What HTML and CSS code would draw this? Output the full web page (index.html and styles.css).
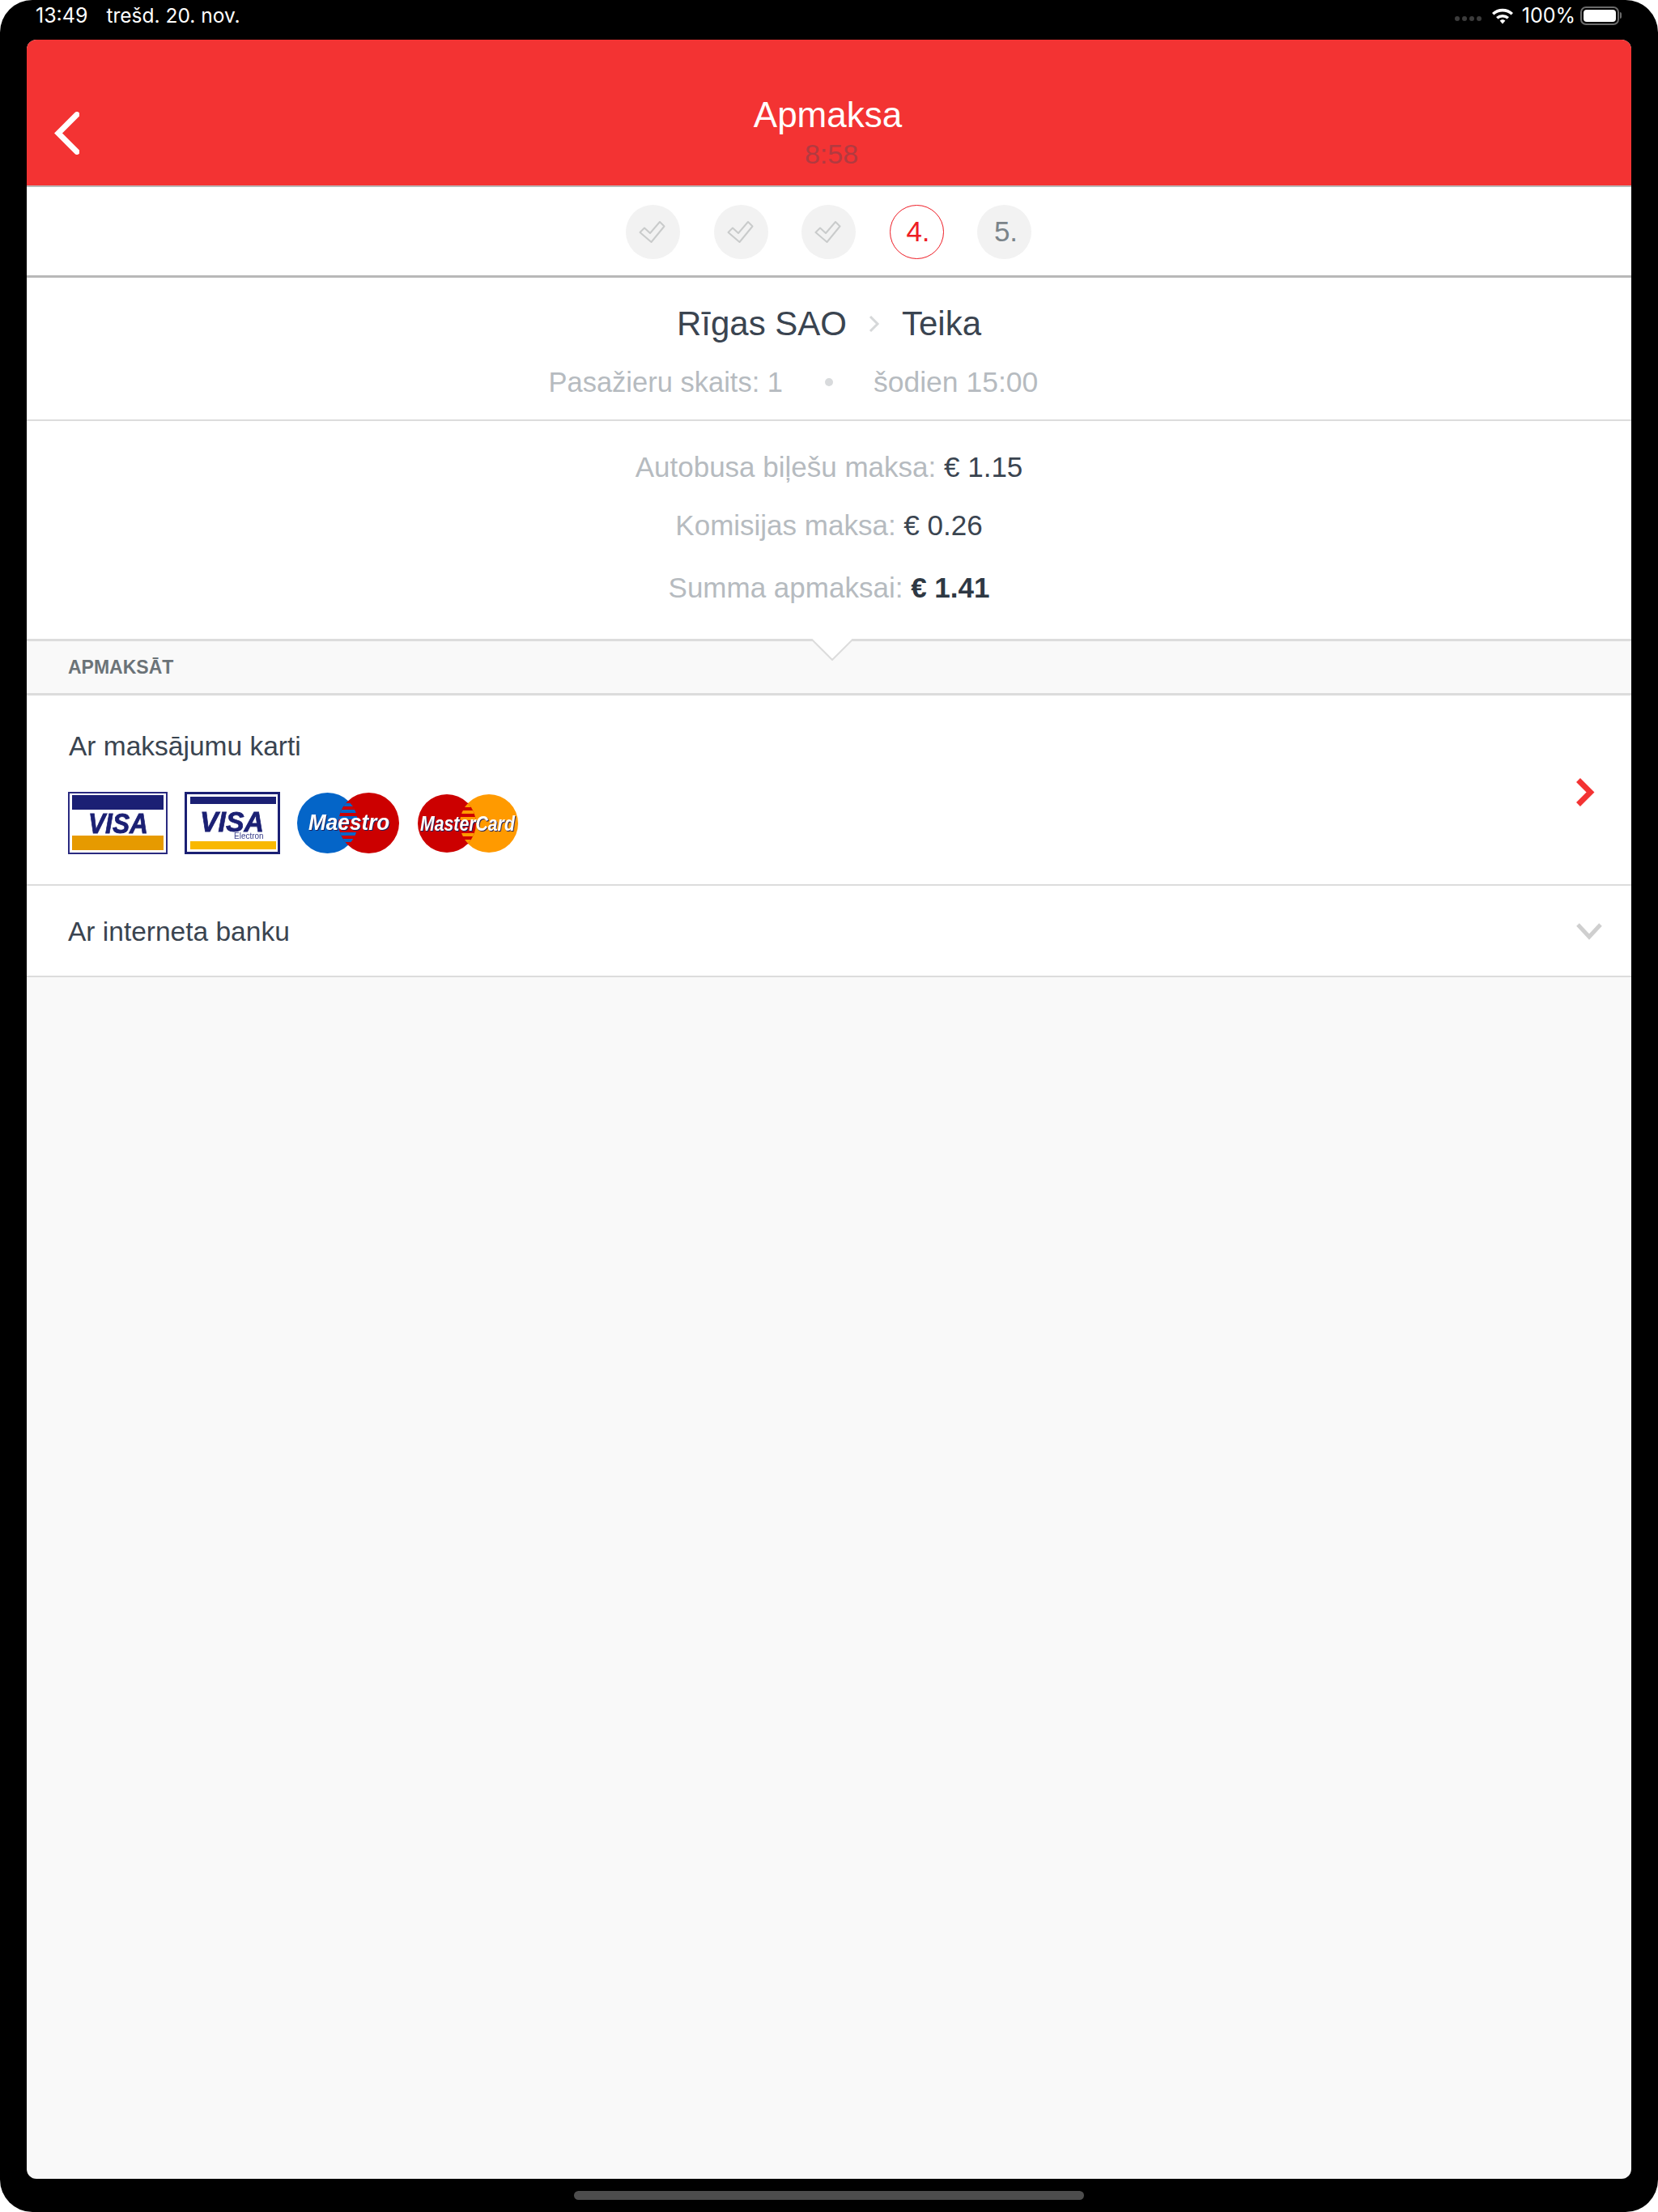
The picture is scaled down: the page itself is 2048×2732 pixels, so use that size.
FILE: index.html
```html
<!DOCTYPE html>
<html>
<head>
    <title>Apmaksa</title>
    <meta name="viewport" content="width=device-width, initial-scale=1.0">
    <link rel="stylesheet" href="styles.css">
</head>
<body>
    <svg class="defs" width="0" height="0">
        <symbol id="tick" viewBox="0 0 33 29">
            <path d="M1.5 15 L7 9.5 L14 16 L26 2 L31.5 7.5 L15.5 27 Z" fill="none" stroke="#c9cbcb" stroke-width="2" stroke-linejoin="round"/>
        </symbol>
        <clipPath id="maestro-lens">
            <circle cx="37.5" cy="38.5" r="37.5"/>
        </clipPath>
        <clipPath id="maestro-right">
            <circle cx="88.5" cy="38.5" r="37.5"/>
        </clipPath>
        <clipPath id="mc-left">
            <circle cx="36" cy="36" r="36"/>
        </clipPath>
        <clipPath id="mc-right">
            <circle cx="88" cy="36" r="36"/>
        </clipPath>
    </svg>

    <div class="device">
        <div class="statusbar">
            <span class="clock">13:49</span>
            <span class="date">trešd. 20. nov.</span>
            <span class="status-right">
                <span class="signal"><i></i><i></i><i></i><i></i></span>
                <svg class="wifi" viewBox="0 0 28 21">
                    <path d="M1 7 A19 19 0 0 1 27 7 L24.6 9.6 A15.5 15.5 0 0 0 3.4 9.6 Z" fill="#fff"/>
                    <path d="M6 12 A12 12 0 0 1 22 12 L19.6 14.6 A8.5 8.5 0 0 0 8.4 14.6 Z" fill="#fff"/>
                    <path d="M10.6 16.6 A5 5 0 0 1 17.4 16.6 L14 20.5 Z" fill="#fff"/>
                </svg>
                <span class="battery-text">100%</span>
                <span class="battery"><b></b></span>
                <span class="battery-nub"></span>
            </span>
        </div>

        <div class="app">
            <header class="topbar">
                <svg class="back" viewBox="0 0 32 53">
                    <path d="M29 3.5 L6 26.5 L29 49.5" fill="none" stroke="#fff" stroke-width="7" stroke-linecap="round" stroke-linejoin="miter"/>
                </svg>
                <div class="topbar-title">
                    <div class="title">Apmaksa</div>
                    <div class="timer">8:58</div>
                </div>
            </header>

            <div class="steps">
                <div class="step"><svg class="tick"><use href="#tick"/></svg></div>
                <div class="step"><svg class="tick"><use href="#tick"/></svg></div>
                <div class="step"><svg class="tick"><use href="#tick"/></svg></div>
                <div class="step current">4.</div>
                <div class="step">5.</div>
            </div>

            <section class="route">
                <div class="route-names">
                    <span>Rīgas SAO</span>
                    <svg class="route-arrow" viewBox="0 0 14 22">
                        <path d="M2 2 L11 11 L2 20" fill="none" stroke="#d6d8d9" stroke-width="3"/>
                    </svg>
                    <span>Teika</span>
                </div>
                <div class="route-meta">
                    <span class="meta-left">Pasažieru skaits: 1</span>
                    <i class="dot"></i>
                    <span class="meta-right">šodien 15:00</span>
                </div>
            </section>

            <section class="prices">
                <div class="price">Autobusa biļešu maksa: <span>€ 1.15</span></div>
                <div class="price">Komisijas maksa: <span>€ 0.26</span></div>
                <div class="price total">Summa apmaksai: <span>€ 1.41</span></div>
            </section>

            <div class="section-head">
                APMAKSĀT
                <svg class="notch" viewBox="0 0 52 27">
                    <path d="M0 0 L26 26 L52 0 Z" fill="#fff"/>
                    <path d="M0 0 L26 26 L52 0" fill="none" stroke="#dcdcdc" stroke-width="2"/>
                </svg>
            </div>

            <div class="pay-row card-row">
                <div class="pay-main">
                    <div class="pay-label">Ar maksājumu karti</div>
                    <div class="card-logos">
                        <svg class="logo visa" viewBox="0 0 123 77">
                            <rect x="1" y="1" width="121" height="75" fill="#fff" stroke="#2a2a80" stroke-width="2"/>
                            <rect x="5" y="4" width="113" height="18" fill="#1b2074"/>
                            <rect x="5" y="54" width="113" height="18" fill="#e69a00"/>
                            <text transform="translate(25 51) scale(.88 1)" class="visa-word">VISA</text>
                        </svg>
                        <svg class="logo visa-e" viewBox="0 0 118 77">
                            <rect x="1.5" y="1.5" width="115" height="74" fill="#fff" stroke="#1b2074" stroke-width="3"/>
                            <rect x="7" y="6" width="106" height="9" fill="#1b2074"/>
                            <rect x="7" y="61" width="106" height="10" fill="#f9b800"/>
                            <text transform="translate(19 49) scale(.94 1)" class="visa-word">VISA</text>
                            <text x="61" y="58" class="electron">Electron</text>
                        </svg>
                        <svg class="logo maestro" viewBox="0 0 126 77">
                            <circle cx="37.5" cy="38.5" r="37.5" fill="#0465c8"/>
                            <circle cx="88.5" cy="38.5" r="37.5" fill="#cc0000"/>
                            <g clip-path="url(#maestro-lens)">
                                <g clip-path="url(#maestro-right)" fill="#0465c8">
                                    <rect x="50" y="14" width="28" height="4"/>
                                    <rect x="50" y="22" width="28" height="4"/>
                                    <rect x="50" y="30" width="28" height="4"/>
                                    <rect x="50" y="50" width="28" height="4"/>
                                    <rect x="50" y="58" width="28" height="4"/>
                                    <rect x="50" y="66" width="28" height="4"/>
                                </g>
                            </g>
                            <text transform="translate(14 47) scale(.97 1)" class="mark-word">Maestro</text>
                        </svg>
                        <svg class="logo mastercard" viewBox="0 0 124 72">
                            <circle cx="88" cy="36" r="36" fill="#ff9a00"/>
                            <circle cx="36" cy="36" r="36" fill="#cc0000"/>
                            <g clip-path="url(#mc-left)">
                                <g clip-path="url(#mc-right)" fill="#ff9a00">
                                    <rect x="48" y="12" width="28" height="4"/>
                                    <rect x="48" y="20" width="28" height="4"/>
                                    <rect x="48" y="28" width="28" height="4"/>
                                    <rect x="48" y="48" width="28" height="4"/>
                                    <rect x="48" y="56" width="28" height="4"/>
                                </g>
                            </g>
                            <text transform="translate(3 45) scale(.85 1)" class="mark-word small">MasterCard</text>
                        </svg>
                    </div>
                </div>
                <svg class="row-icon go" viewBox="0 0 24 37">
                    <path d="M3.5 3.5 L18.5 18.5 L3.5 33.5" fill="none" stroke="#f33333" stroke-width="7" stroke-linejoin="miter"/>
                </svg>
            </div>

            <div class="pay-row bank-row">
                <div class="pay-label">Ar interneta banku</div>
                <svg class="row-icon open" viewBox="0 0 32 22">
                    <path d="M2 3 L16 18 L30 3" fill="none" stroke="#cfcfcf" stroke-width="5"/>
                </svg>
            </div>
        </div>

        <div class="home-area"><div class="home-bar"></div></div>
    </div>
</body>
</html>
```

FILE: styles.css
```css
* { box-sizing: border-box; }
html, body { margin: 0; padding: 0; background: #fff; }
.defs { display: block; }

.device { width: 2048px; height: 2732px; background: #000; border-radius: 40px; padding: 0 33px; display: flex; flex-direction: column; overflow: hidden; font-family: "Liberation Sans", Arial, sans-serif; }

/* status bar */
.statusbar { height: 49px; flex: none; display: flex; align-items: center; margin: 0 -33px; padding: 0 45px 11px 44px; color: #fff; font-family: Inter, sans-serif; font-size: 25px; }
.date { margin-left: 23px; font-size: 24.5px; }
.status-right { margin-left: auto; display: flex; align-items: center; }
.signal { display: flex; gap: 3px; margin-right: 12px; margin-top: 8px; }
.signal i { width: 6px; height: 6px; border-radius: 50%; background: #3c3c3c; }
.wifi { width: 28px; height: 21px; margin-right: 10px; }
.battery { width: 48px; height: 23px; border: 2px solid #6b6b6b; border-radius: 7px; padding: 2px; margin-left: 6px; display: block; }
.battery b { display: block; height: 100%; background: #fff; border-radius: 4px; }
.battery-nub { width: 2px; height: 8px; background: #6b6b6b; border-radius: 0 2px 2px 0; margin-left: 1px; }

/* app window */
.app { flex: none; height: 2642px; background: #f9f9f9; border-radius: 12px; overflow: hidden; display: flex; flex-direction: column; }

.topbar { height: 182px; flex: none; background: #f33333; border-bottom: 2px solid #b8b8b8; display: flex; padding: 0 68px 0 33px; }
.back { width: 32px; height: 53px; margin-top: 89px; flex: none; }
.topbar-title { flex: 1; text-align: center; padding-top: 68px; }
.title { color: #fff; font-size: 44px; line-height: 50px; }
.timer { color: #b23a40; font-size: 34px; line-height: 40px; margin-top: 3px; padding-left: 9px; }

.steps { height: 112px; flex: none; background: #fff; border-bottom: 3px solid #b8b8b8; display: flex; justify-content: center; align-items: center; gap: 41.5px; padding: 1px 1px 0 0; }
.step { width: 67px; height: 67px; border-radius: 50%; background: #f2f2f2; color: #7b848a; font-size: 35px; padding-left: 4px; display: flex; align-items: center; justify-content: center; }
.step:has(.tick) { padding: 0 2px 0 0; }
.step.current { background: #fff; border: 1.5px solid #ee1c25; color: #ee1c25; }
.tick { width: 33px; height: 29px; }

.route { height: 177px; flex: none; background: #fff; border-bottom: 2px solid #dcdcdc; padding-top: 29px; }
.route-names { display: flex; justify-content: center; align-items: center; gap: 27px; color: #3a4450; font-size: 42px; line-height: 56px; }
.route-arrow { width: 14px; height: 22px; }
.route-meta { display: grid; grid-template-columns: 1fr auto 1fr; align-items: center; gap: 50px; color: #b6bbc0; font-size: 34.5px; line-height: 44px; margin-top: 22px; }
.meta-left { text-align: right; padding-right: 2px; }
.meta-right { font-size: 35.5px; }
.dot { width: 10px; height: 10px; border-radius: 50%; background: #d8dadc; }

.prices { height: 269px; flex: none; background: #fff; text-align: center; padding-top: 34px; color: #b6bbc0; font-size: 35px; }
.price { line-height: 46px; margin-bottom: 26px; }
.price span { color: #3a4450; }
.price.total { margin-top: 31px; }
.price.total span { color: #2e3843; font-weight: 700; }

.section-head { height: 70px; flex: none; background: #f9f9f9; border-top: 3px solid #dcdcdc; border-bottom: 3px solid #dcdcdc; padding: 17px 0 0 51px; color: #6b7378; font-size: 23px; font-weight: 700; line-height: 30px; position: relative; }
.notch { position: absolute; left: 969px; top: -3px; width: 52px; height: 27px; }

.pay-row { background: #fff; flex: none; display: flex; align-items: center; justify-content: space-between; border-bottom: 2px solid #dcdcdc; padding: 0 37px 0 51px; }
.card-row { height: 235px; }
.bank-row { height: 113px; }
.bank-row .pay-label { padding-top: 2px; }
.pay-label { color: #3a4450; font-size: 33.5px; line-height: 44px; }
.pay-main { align-self: flex-start; padding: 41px 0 0 1px; }
.card-logos { display: flex; align-items: center; gap: 21px; margin: 34px 0 0 -1px; }
.logo { display: block; height: 77px; filter: blur(.5px); }
.visa { width: 123px; }
.visa-e { width: 118px; }
.maestro { width: 126px; }
.mastercard { width: 124px; height: 72px; margin-left: 2px; }
.visa-word { font-weight: 700; font-style: italic; font-size: 36px; fill: #1b2074; stroke: #1b2074; stroke-width: .8px; }
.electron { font-size: 10px; fill: #3a3f8a; }
.mark-word { font-weight: 700; font-style: italic; font-size: 27px; fill: #fff; filter: drop-shadow(1.5px 1.5px 0 #20205a); }
.mark-word.small { font-size: 25px; }

.row-icon { flex: none; }
.go { width: 24px; height: 37px; margin: 5px 8px 0 0; }
.open { width: 32px; height: 22px; margin-right: -1px; }

.home-area { flex: 1; display: flex; justify-content: center; padding-top: 15px; }
.home-bar { width: 630px; height: 11px; border-radius: 6px; background: #4d4d4d; }
```
